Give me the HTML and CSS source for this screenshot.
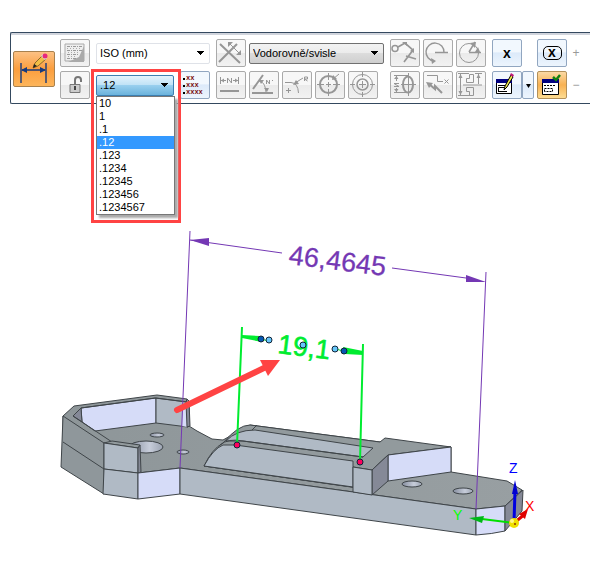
FILE: index.html
```html
<!DOCTYPE html>
<html lang="cs">
<head>
<meta charset="utf-8">
<title>Kóta</title>
<link rel="stylesheet" href="styles.css">
</head>
<body>
<header class="toolbar">
  <button class="btn mode" aria-label="Smart Dimension">
    <svg viewBox="0 0 42 36"><g stroke="#173a7c" stroke-width="1.4" fill="#173a7c"><path d="M8 12V32M33 12V32M9 19H32"/><path d="M8 19l6-3v6zM33 19l-6-3v6z" stroke="none"/></g><path d="M20 17l2-5 7-7 4 3-8 7z" fill="#f1bd45" stroke="#8b672a"/><path d="M20 17l1-4 3 2z" fill="#222"/><path d="M28 5l2-2 4 4-2 2z" fill="#d9e1ea"/><circle cx="32" cy="5" r="2.500" fill="#e8277b"/></svg>
  </button>
  <div class="group">
    <button class="btn off" aria-label="Style table"><svg viewBox="0 0 30 28"><path d="M5 5H24V22H5z" fill="#eee" stroke="#aaa"/><path d="M24 7V23H8L19 18z" fill="#aaa"/><path d="M7 7.500h16M7 11.500h15M7 15.500h12M7 19.500h10" stroke="#999" stroke-dasharray="3 1 1 1"/><path d="M7 9.500h14M8 13.500h12M8 17.500h9" stroke="#aaa" stroke-dasharray="1 2"/></svg></button>
    <button class="btn off" aria-label="Lock"><svg viewBox="0 0 30 28"><path d="M15 13V9c0-4 6-4 6 0v2" fill="none" stroke="#777" stroke-width="2"/><path d="M10 13.500H20V21.500H10z" fill="#ccc" stroke="#777"/><path d="M15 15v4" stroke="#444" stroke-width="2"/></svg></button>
  </div>
  <div class="group fields">
    <div class="cell"><select class="select" aria-label="Style"><option>ISO (mm)</option></select></div>
    <div class="cell split">
      <div class="picker">
        <select class="select hot" aria-label="Round-off"><option>.12</option></select>
        <div class="menu">
          <ul class="list" role="listbox" aria-label="Round-off values">
            <li role="option">10</li><li role="option">1</li><li role="option">.1</li><li role="option" aria-selected="true" class="chosen">.12</li><li role="option">.123</li><li role="option">.1234</li><li role="option">.12345</li><li role="option">.123456</li><li role="option">.1234567</li>
          </ul>
        </div>
      </div>
      <button class="btn blue" aria-label="Round-off"><svg viewBox="0 0 30 28"><g class="tiny"><text x="6" y="9">xx</text><text x="6" y="16">xxx</text><text x="6" y="23">xxxx</text></g><path d="M3 7h2v2H3zM3 14h2v2H3zM3 21h2v2H3z"/></svg></button>
    </div>
  </div>
  <div class="group">
    <div class="row">
      <button class="btn off" aria-label="Axis"><svg class="line" viewBox="0 0 30 28"><path d="M4 5L24 24M3 23L21 5" stroke-width="2"/><path d="M13 4L24 15"/><path class="solid" d="M12 3h5l-5 5zM25 16v-5l-5 5z"/></svg></button>
      <select class="select wide" aria-label="Orientation"><option>Vodorovně/svisle</option></select>
    </div>
    <div class="row">
      <button class="btn off" aria-label="Length"><svg class="line" viewBox="0 0 30 28"><path d="M4.500 6V13M22.500 6V13M5 9.500H10M17 9.500H22"/><path d="M4 20H23" stroke-width="2"/><path d="M11.500 12V7L15.500 12V7"/><path class="solid" d="M5 9.500l3-2v4zM22 9.500l-3-2v4z"/></svg></button>
      <button class="btn off" aria-label="Angle"><svg class="line" viewBox="0 0 30 28"><path d="M3 22H24M4 18L14 4" stroke-width="2"/><path d="M10 10c4 1 6 3 7 11M17.500 13V9L20.500 13V9M23 9.500h1"/><path class="solid" d="M10 9h5l-3 4zM15 17h5l-2 4z"/></svg></button>
      <button class="btn off" aria-label="Radius"><svg class="line" viewBox="0 0 30 28"><path d="M3 11.500H9Q16 12 16.500 22M6.500 17v5M4 19.500h5M13 12l8-5M22.500 10V6h3v2h-3l3 2"/><path class="solid" d="M11 14l3-5 3 4z"/></svg></button>
      <button class="btn off" aria-label="Diameter"><svg class="line" viewBox="0 0 30 28"><circle cx="13.500" cy="13.500" r="8.500" stroke-width="2"/><path d="M2 13.500H9M18 13.500H25M13.500 2V9M13.500 18V25M11 13.500h5M13.500 11v5M18 8l6-5"/><path class="solid" d="M17 9l1-5 4 4z"/></svg></button>
      <button class="btn off" aria-label="Concentric"><svg class="line" viewBox="0 0 30 28"><circle cx="14.500" cy="13.500" r="10"/><circle cx="14.500" cy="13.500" r="5.500" stroke-width="1.500"/><path d="M2 13.500h5M22 13.500h5M14.500 1v5M14.500 21v5M11 13.500h7M14.500 10v7"/></svg></button>
    </div>
  </div>
  <div class="group">
    <div class="row">
      <button class="btn off" aria-label="Coordinate"><svg class="line" viewBox="0 0 30 28"><circle cx="5" cy="9.500" r="3" stroke-width="1.500"/><path d="M8 8l7-4 8 7-9 12M16 17l10 3" stroke-width="1.700"/><path class="solid" d="M12 3h5v4zM20 12l4-3v5z"/></svg></button>
      <button class="btn off" aria-label="Arc angle"><svg class="line" viewBox="0 0 30 28"><path d="M12 13.500H25M21 13.500A9 9 0 1 0 11 22" stroke-width="1.400"/><path class="solid" d="M8 19l5 3-4 3z"/></svg></button>
      <button class="btn off" aria-label="Arc length"><svg class="line" viewBox="0 0 30 28"><circle cx="13" cy="14" r="9.500"/><path d="M13 13.500H25M13 13L19 3" stroke-width="1.500"/><path class="solid" d="M14 4l6-1-1 6zM19 13l3-5 2 5z"/></svg></button>
    </div>
    <div class="row">
      <button class="btn off" aria-label="Symmetric diameter"><svg class="line" viewBox="0 0 30 28"><ellipse cx="18" cy="13.500" rx="5" ry="8" stroke-width="2"/><path d="M4 4.500H18M4 21.500H18M6.500 5v5M6.500 17v4M4 12.500h5M4 15.500h5l-5-3M11 13.500H26M18.500 2V25"/><path class="solid" d="M6.500 5l2 3H4zM6.500 21l2-3H4z"/></svg></button>
      <button class="btn off" aria-label="Leader"><svg class="line" viewBox="0 0 30 28"><path d="M4 4.500H14.500V10.500H20M21.500 8.500l4 4M25.500 8.500l-4 4"/><path d="M6 13l6 5v-3l7 7" stroke-width="2"/><path class="solid" d="M3 11l7 1-4 5z"/></svg></button>
      <button class="btn off" aria-label="Half section"><svg class="line" viewBox="0 0 30 28"><path d="M4.500 3V24M2 2.500H13M22.500 3V13M19 2.500H26M2 24.500H14M10.500 11.500V7.500H13.500V3.500H17.500V11.500zM10.500 16.500V20.500H13.500V24.500H17.500V16.500zM7 14H26"/><path class="solid" d="M4.500 3l2 4h-4zM4.500 24l2-4h-4zM22.500 3l2 4h-4z"/></svg></button>
    </div>
  </div>
  <div class="group">
    <div class="row"><button class="btn blue mark">x</button></div>
    <div class="row joined">
      <button class="btn blue" aria-label="Prefix"><svg viewBox="0 0 30 28"><path d="M4.500 8.500H19.500V22.500H4.500z" fill="#fff" stroke="#000"/><path d="M4 8H20V12H4z" fill="#000080"/><path d="M6 14.500h7M6.500 20.500V16.500H12.500M6 20.500H15" stroke="#000" fill="none"/><path d="M12 19l1-4 6-11 2 2-6 10z" fill="#eee64c" stroke="#000"/><path d="M18 4l1-2 3 2-1 2z" fill="#c21a78"/></svg></button>
      <button class="btn blue drop" aria-label="Prefix options"><svg viewBox="0 0 10 26"><path d="M3 12h5l-2.500 4z"/></svg></button>
    </div>
  </div>
  <div class="group tight">
    <div class="row"><button class="btn blue mark"><span class="ring">x</span></button></div>
    <button class="btn orange" aria-label="Confirm prefix"><svg viewBox="0 0 30 28"><path d="M5.500 8.500H21.500V23.500H5.500z" fill="#fff" stroke="#000"/><path d="M5 8H22V12H5z" fill="#000080"/><path d="M7 14.500h12M7.500 20.500V17.500H15.500V20.500z" stroke="#000" fill="none" stroke-dasharray="2 1"/><path d="M16 6l3 3 4-5" stroke="#118011" stroke-width="2.500" fill="none"/></svg></button>
  </div>
  <div class="group tight">
    <button class="btn bare">+</button>
    <button class="btn bare">−</button>
  </div>
</header>
<main>
<svg class="scene" viewBox="0 104 590 460" role="img" aria-label="3D model">
  <defs>
    <linearGradient id="top" x1="0" x2="1"><stop offset="0" stop-color="#8e9699"/><stop offset="1" stop-color="#989fa2"/></linearGradient>
    <linearGradient id="hole"><stop offset="0" stop-color="#858d9e"/><stop offset=".6" stop-color="#c7cdda"/><stop offset="1" stop-color="#9ba3b1"/></linearGradient>
  </defs>
  <g stroke="#3f4549" stroke-width="1" stroke-linejoin="round">
    <path fill="url(#top)" d="M63 416L74 406 157 395 187 399 189 401V426L197 431 212 439 223 440 250 425 380 442 451 447V472L507 481 522 490 505 506 476 509 180 468 138 473 104 469 63 442z"/>
    <path fill="#8f979b" d="M63 416L104 443V494L61 467z"/>
    <path fill="none" d="M63 442L104 469"/>
    <path fill="#d6dcf8" d="M81 408L156 398V423L95 431 82 422z"/>
    <path fill="#b0bac5" d="M156 398L187 402 188 427 156 423z"/>
    <path fill="#d6dcf8" stroke="none" d="M183 404L187 402V427L182 426z"/>
    <path fill="#858997" d="M187 399L189 401 190 426 187 427 186 402z"/>
    <path fill="#858997" d="M73 416L81 408 82 422z"/>
    <path fill="none" d="M73 416L81 408 155 398 187 402M73 416L112 442"/>
    <ellipse cx="157" cy="435" rx="7" ry="2" fill="url(#hole)"/>
    <ellipse cx="183" cy="452" rx="6" ry="2" fill="url(#hole)"/>
    <ellipse cx="146" cy="447" rx="17" ry="6" fill="url(#hole)"/>
    <path fill="#929a9d" d="M104 443L112 441 140 445 138 448z"/>
    <path fill="#b0bac5" d="M104 443L138 448V473L104 469z"/>
    <path fill="#858997" d="M138 448L140 445 141 472 138 473z"/>
    <path fill="#b0bac5" d="M104 469L138 473V499L103 494z"/>
    <path fill="#d6dcf8" d="M138 473L180 468V494L138 499z"/>
    <path fill="#b0bac5" d="M180 468L476 509V535L180 494z"/>
    <path fill="#d6dcf8" d="M476 509L505 506V531Q492 534 476 535z"/>
    <path fill="#858997" d="M505 506L523 490 522 511 505 531z"/>
    <path fill="#929a9d" d="M223 443Q238 425 250 425L380 442 385 438 451 447 388 455 372 470 353 467V487L204 466Q212 449 223 443z"/>
    <path fill="none" d="M204 466L372 490"/>
    <path fill="#b0bac5" d="M226 441Q236 430 255 430L373 448 363 457 243 441z"/>
    <path fill="#b0bac5" d="M204 466Q213 449 223 445L235 445 353 461V487z"/>
    <path fill="none" d="M220 445Q228 438 243 441L363 457M252 430L257 425"/>
    <path fill="#d6dcf8" d="M388 455L451 447V472L388 481z"/>
    <path fill="#858997" d="M372 470L388 455V481L372 495z"/>
    <path fill="#b0bac5" d="M353 467L372 470V495L353 492z"/>
    <ellipse cx="412" cy="484" rx="10" ry="3" fill="url(#hole)"/>
    <ellipse cx="463" cy="491" rx="10" ry="3" fill="url(#hole)"/>
  </g>
  <g stroke="#7438b4" fill="#7438b4">
    <path fill="none" d="M190 231L180 468M486 272L476 509M190 240L282 253M392 268L466 278"/>
    <path stroke="none" d="M190 240L209 238V246zM486 282L466 275V282z"/>
    <text class="dim" stroke-width=".3" transform="translate(288 264) rotate(7)">46,4645</text>
  </g>
  <g stroke="#00ec30" fill="#00ec30">
    <path fill="none" stroke-width="2" d="M242 327L237 445M363 344L360 462"/>
    <path stroke="none" d="M242 335L260 336 262 342 242 338zM363 355L345 354 343 347 363 351z"/>
    <path fill="none" d="M260 339L269 341M335 349L344 351"/>
    <text class="dim" stroke-width=".6" transform="translate(277 353) rotate(7)">19,1</text>
  </g>
  <g stroke="#102438">
    <circle cx="261" cy="339" r="3" fill="#0658b4"/><circle cx="269" cy="340" r="3" fill="#66c6fa"/>
    <circle cx="303" cy="345" r="3" fill="#66c6fa"/><circle cx="335" cy="349" r="3" fill="#66c6fa"/>
    <circle cx="344" cy="351" r="3" fill="#0658b4"/>
    <circle cx="237" cy="445" r="3" fill="#ff005d"/><circle cx="360" cy="462" r="3" fill="#ff005d"/>
  </g>
  <path d="M177 410L266 367" stroke="#ff4343" stroke-width="6" stroke-linecap="round"/>
  <path d="M260 360H280L268 376z" fill="#ff4343"/>
  <g stroke-width="3">
    <path d="M514 523L525 514" stroke="#e00000"/><path d="M519 514L528 509 525 519z" fill="#e00000"/>
    <path d="M514 523L515 491" stroke="#0000e0"/><path d="M515 480L518 494H512z" fill="#0000d0"/>
    <path d="M514 523L482 519" stroke="#00e000" stroke-width="2"/><path d="M469 518L484 516 482 523z" fill="#00b818"/>
    <circle cx="514" cy="523" r="5" fill="#efe000"/><circle cx="512" cy="521" r="2" fill="#fff78a"/><circle cx="515" cy="524" r="1" fill="#903000"/>
  </g>
  <g class="axis"><text x="509" y="473" fill="#0000ff">Z</text><text x="453" y="520" fill="#00ff00">Y</text><text x="525" y="511" fill="#ff0000">X</text></g>
</svg>
</main>
</body>
</html>
```
FILE: styles.css
```css
* { box-sizing: border-box; }
body {
  margin: 0;
  padding-top: 32px;
  background: #fff;
  font-family: "Liberation Sans", sans-serif;
  font-size: 11px;
  color: #000;
  overflow-x: hidden;
}
.toolbar {
  display: flex;
  gap: 3px;
  margin-left: 10px;
  padding: 6px 0 4px 2px;
  border: 1px solid #34495f;
  border-right: 0;
  border-radius: 2px 0 0 2px;
  box-shadow: inset 0 2px #d0d4dc;
}
.group { display: flex; flex-direction: column; gap: 4px; flex: none; }
.group + .group { margin-left: 3px; }
.group + .tight { margin-left: 0; }
.row { display: flex; align-items: center; gap: 3px; height: 28px; }
.joined { gap: 0; }
.btn {
  flex: none;
  width: 30px;
  height: 28px;
  padding: 0;
  border: 1px solid #aaa;
  border-radius: 2px;
  font: inherit;
}
.btn svg { display: block; width: 30px; height: 28px; margin: -1px; }
.off { background: linear-gradient(#f7f7f7 50%, #eaeaea 50%, #f2f2f2); }
.blue { background: linear-gradient(#f2f8fe 45%, #dceafa 50%, #edf5fd); border-color: #91a6c0; }
.orange { background: linear-gradient(#fbd9a4, #f8b152 50%, #fddc92); border-color: #b39059; }
.mode {
  align-self: center;
  width: 42px;
  height: 36px;
  margin-right: 2px;
  background: linear-gradient(#fcc184, #fb9e3e 50%, #fdb55b);
  border-color: #a8814e;
}
.btn.mode svg { width: 42px; height: 36px; }
.drop { width: 12px; }
.btn.drop svg { width: 10px; height: 26px; margin: 0; }
.bare { width: 12px; border: 0; background: none; color: #999; font-size: 12px; }
.mark { font-weight: bold; font-size: 14px; line-height: 16px; }
.ring {
  display: block;
  width: 19px;
  height: 14px;
  margin: 0 auto;
  border: 1px solid #000;
  border-radius: 5px;
  line-height: 10px;
}
.line { fill: none; stroke: #969696; }
.line .solid { fill: #969696; stroke: none; }
.tiny { font: bold 7px "Liberation Mono", monospace; fill: #7a0a0a; }
.cell { display: flex; align-items: center; height: 28px; }
.split { gap: 6px; }
.select {
  appearance: none;
  width: 114px;
  height: 21px;
  padding: 0 3px;
  border: 1px solid #dfe2e8;
  border-radius: 2px;
  font: inherit;
  color: #000;
  background:
    linear-gradient(to top left, transparent 50%, #000 50%) right 4px center / 4px 4px no-repeat,
    linear-gradient(to top right, transparent 50%, #000 50%) right 8px center / 4px 4px no-repeat,
    var(--fill, #fff);
  background:
    linear-gradient(to bottom right, #000 50%, transparent 50%) right 4px center / 4px 4px no-repeat,
    linear-gradient(to bottom left, #000 50%, transparent 50%) right 8px center / 4px 4px no-repeat,
    var(--fill, linear-gradient(#fff, #fff));
}
.select.hot {
  --fill: linear-gradient(#e4f3fc, #bfe2f6 48%, #98cfee 50%, #6bb3dc);
  display: block;
  width: 100%;
  border-color: #3c7fb1;
}
.select.wide {
  --fill: linear-gradient(#f2f2f2, #ebebeb 50%, #dcdcdc 50%, #cfcfcf);
  width: 135px;
  border-color: #707070;
}
.picker { position: relative; width: 78px; height: 21px; }
.menu {
  position: absolute;
  z-index: 2;
  top: -6px;
  left: -5px;
  width: 90px;
  padding: 24px 4px 5px 2px;
  border: 3px solid #ff4343;
}
.list {
  width: 79px;
  margin: 0;
  padding: 0;
  list-style: none;
  background: #fff;
  border: 1px solid #777;
  box-shadow: 3px 3px 2px #aaa;
}
.list li { height: 13px; line-height: 13px; padding-left: 2px; }
.list .chosen { background: #3399ff; color: #fff; }
.scene { display: block; width: 100%; height: auto; }
.dim { font: 27px "Liberation Sans", sans-serif; }
.axis { font: 14px "Liberation Sans", sans-serif; }
```
